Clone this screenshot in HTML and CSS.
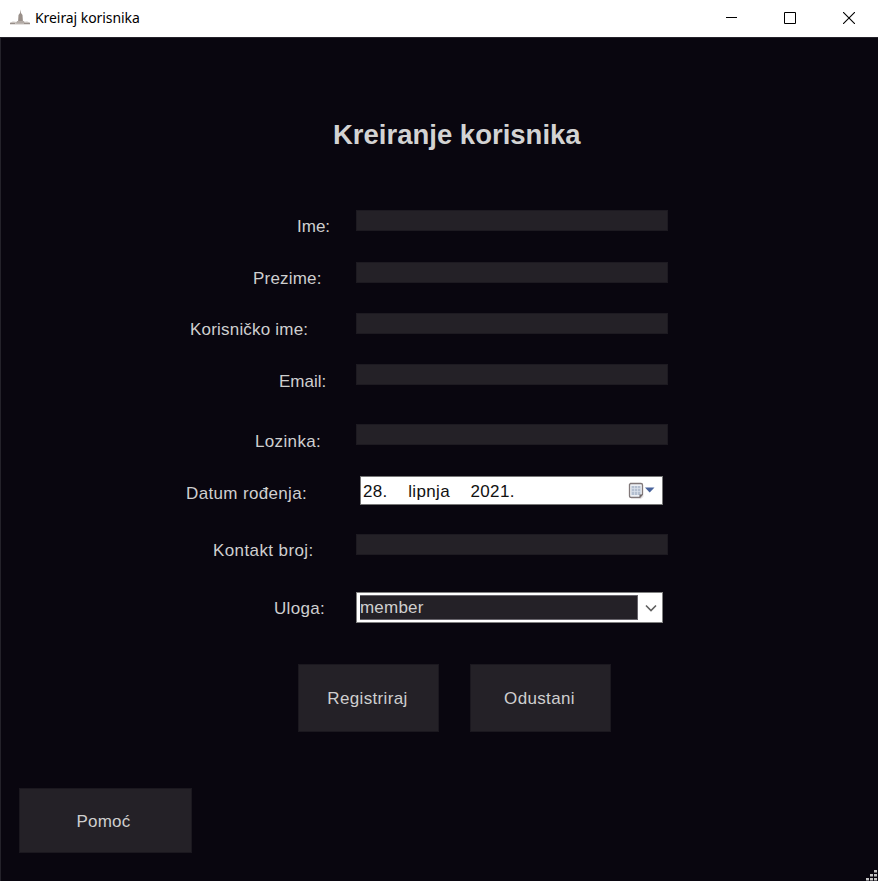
FILE: index.html
```html
<!DOCTYPE html>
<html lang="hr">
<head>
<meta charset="utf-8">
<title>Kreiraj korisnika</title>
<link rel="stylesheet" href="styles.css">
</head>
<body>
<div class="window">
  <header class="titlebar">
    <svg class="app-icon" width="20" height="17" viewBox="0 0 20 17">
      <path d="M0 13.500L3 12.500L7 13H13L17 12.500L20 13.500V15.500H0Z" fill="#c9c3bf"/>
      <path d="M10.500 .5L11 4L12.500 6L13 13.500H8L8.500 6L10 4Z" fill="#998f89"/>
      <path d="M7 12H14L15 14.500H6Z" fill="#b3aba6"/>
      <path d="M0 14.500H5M14 14.500H20" stroke="#978e89"/>
    </svg>
    <span class="caption">Kreiraj korisnika</span>
    <div class="controls">
      <svg width="12" height="12" viewBox="0 0 12 12"><path d="M1 5.500H12" stroke="#000"/></svg>
      <svg width="12" height="12" viewBox="0 0 12 12"><path d="M.5 .5H11.500V11.500H.5Z" fill="none" stroke="#000"/></svg>
      <svg width="12" height="12" viewBox="0 0 12 12"><path d="M0 0L12 12M12 0L0 12" stroke="#000" stroke-width="1.1"/></svg>
    </div>
  </header>
  <main class="client">
    <h1>Kreiranje korisnika</h1>
    <form class="form">
      <div class="row first"><label class="ime">Ime:</label><div class="field"></div></div>
      <div class="row"><label class="prezime">Prezime:</label><div class="field"></div></div>
      <div class="row"><label class="korisnicko">Korisničko ime:</label><div class="field"></div></div>
      <div class="row email-row"><label class="email">Email:</label><div class="field"></div></div>
      <div class="row first"><label class="lozinka">Lozinka:</label><div class="field"></div></div>
      <div class="row tall"><label class="datum">Datum rođenja:</label>
        <div class="date">
          <span class="day">28.</span><span class="month">lipnja</span><span class="year">2021.</span>
          <svg class="calendar" width="28" height="18" viewBox="0 0 28 18">
            <path d="M3 16.200H13L15.500 14" fill="none" stroke="#d5d2d5"/>
            <path d="M2.500 1.500H13Q14.500 1.500 14.500 3V12.500L12 15.300H3Q1.500 15.300 1.500 13.800V2.500Z" fill="#eef1f6" stroke="#817879" stroke-width="1.3"/>
            <rect x="3.500" y="4" width="9" height="9" fill="#b4bfd0"/>
            <path d="M3.500 6.500H12.500M3.500 9.500H12.500M6.500 4V13M9.500 4V13" stroke="#dde3ec" stroke-width=".7"/>
            <path d="M11.500 15.500V12.500H14.800Z" fill="#6e6768"/>
            <path d="M17 5.500H26.500L21.700 10.500Z" fill="#48639c"/>
          </svg>
        </div>
      </div>
      <div class="row tall"><label class="kontakt">Kontakt broj:</label><div class="field"></div></div>
      <div class="row role"><label class="uloga">Uloga:</label>
        <div class="combo"><div class="value">member</div>
          <svg width="12" height="8" viewBox="0 0 12 8"><path d="M1 1.500L6 6.500L11 1.500" fill="none" stroke="#606060" stroke-width="1.6"/></svg>
        </div>
      </div>
      <div class="actions">
        <button type="button">Registriraj</button>
        <button type="button">Odustani</button>
      </div>
    </form>
    <button type="button" class="help">Pomoć</button>
  </main>
  <svg class="grip" width="12" height="12" viewBox="0 0 12 12" fill="#c4c4c4">
    <rect x="8" y="1" width="3" height="2.500"/><rect x="4" y="5" width="3" height="2.500"/><rect x="8" y="5" width="3" height="2.500"/>
    <rect x="0" y="9" width="3" height="2.500"/><rect x="4" y="9" width="3" height="2.500"/><rect x="8" y="9" width="3" height="2.500"/>
  </svg>
</div>
</body>
</html>
```
FILE: styles.css
```css
* { box-sizing: border-box; }
body { margin: 0; background: #09060f; font-family: "Liberation Sans", Arial, sans-serif; }
.window { position: relative; width: 878px; height: 881px; overflow: hidden; }
.titlebar { height: 37px; background: #fff; display: flex; align-items: center; padding: 0 23px 2px 10px; }
.app-icon { flex: none; }
.caption { margin-left: 5px; font: 14px/20px "Noto Sans", "Open Sans", sans-serif; letter-spacing: -.07px; color: #000; white-space: nowrap; }
.controls { margin-left: auto; display: flex; gap: 47px; }
.controls svg { display: block; }
.client { height: 844px; border-left: 1px solid #24222a; border-top: 1px solid #24222a; background: #09060f; }
h1 { margin: 0; padding: 80px 0 0 332px; font-size: 27.5px; line-height: 34px; height: 172px; color: #d3d3d3; white-space: nowrap; }
.form { margin: 0; }
.row { display: grid; grid-template-columns: 355px 1fr; height: 51px; color: #cfcfcf; font-size: 17px; line-height: 20px; letter-spacing: .2px; }
.row.first { height: 52px; }
.row.email-row { height: 60px; }
.row.tall { height: 58px; }
.row.role { height: 72px; }
label { padding-top: 7px; white-space: nowrap; }
.ime { padding-left: 296px; letter-spacing: 0; }
.prezime { padding-left: 252px; }
.korisnicko { padding-left: 189px; }
.email { padding-left: 278px; letter-spacing: 0; padding-top: 8px; }
.lozinka { padding-left: 254px; letter-spacing: .35px; padding-top: 8px; }
.datum { padding-left: 185px; padding-top: 8px; letter-spacing: .35px; }
.kontakt { padding-left: 212px; letter-spacing: .4px; }
.uloga { padding-left: 273px; letter-spacing: .3px; }
.field { width: 312px; height: 21px; background: #242127; border: 1px solid #1d1a21; }
.date { width: 303px; height: 29px; margin-left: 4px; border: 1px solid #777; background: #fff; color: #111; display: flex; align-items: center; padding: 1px 6px 0 2px; letter-spacing: .35px; }
.day, .month, .year { padding-top: 1px; }
.month { margin-left: 20.500px; }
.year { margin-left: 20.500px; }
.calendar { margin-left: auto; }
.combo { width: 307px; height: 31px; border: 1px solid #808080; background: #fff; display: flex; align-items: center; justify-content: space-between; padding: 0 5px 0 3px; }
.value { width: 278px; height: 25px; background: #242127; border: 1px solid #66636a; border-left-width: 0; line-height: 23px; letter-spacing: .2px; }
.actions { display: flex; gap: 31px; padding-left: 297px; }
button { display: flex; align-items: center; justify-content: center; width: 141px; height: 68px; padding: 2px 2px 0 0; background: #242127; border: 1px solid #1b181f; color: #cfcfcf; font: 17px/20px "Liberation Sans", Arial, sans-serif; letter-spacing: .35px; }
.help { width: 173px; height: 65px; margin: 56px 0 0 18px; padding: 2px 4px 0 0; letter-spacing: .2px; }
.grip { position: absolute; right: 0; bottom: 0; }
```
